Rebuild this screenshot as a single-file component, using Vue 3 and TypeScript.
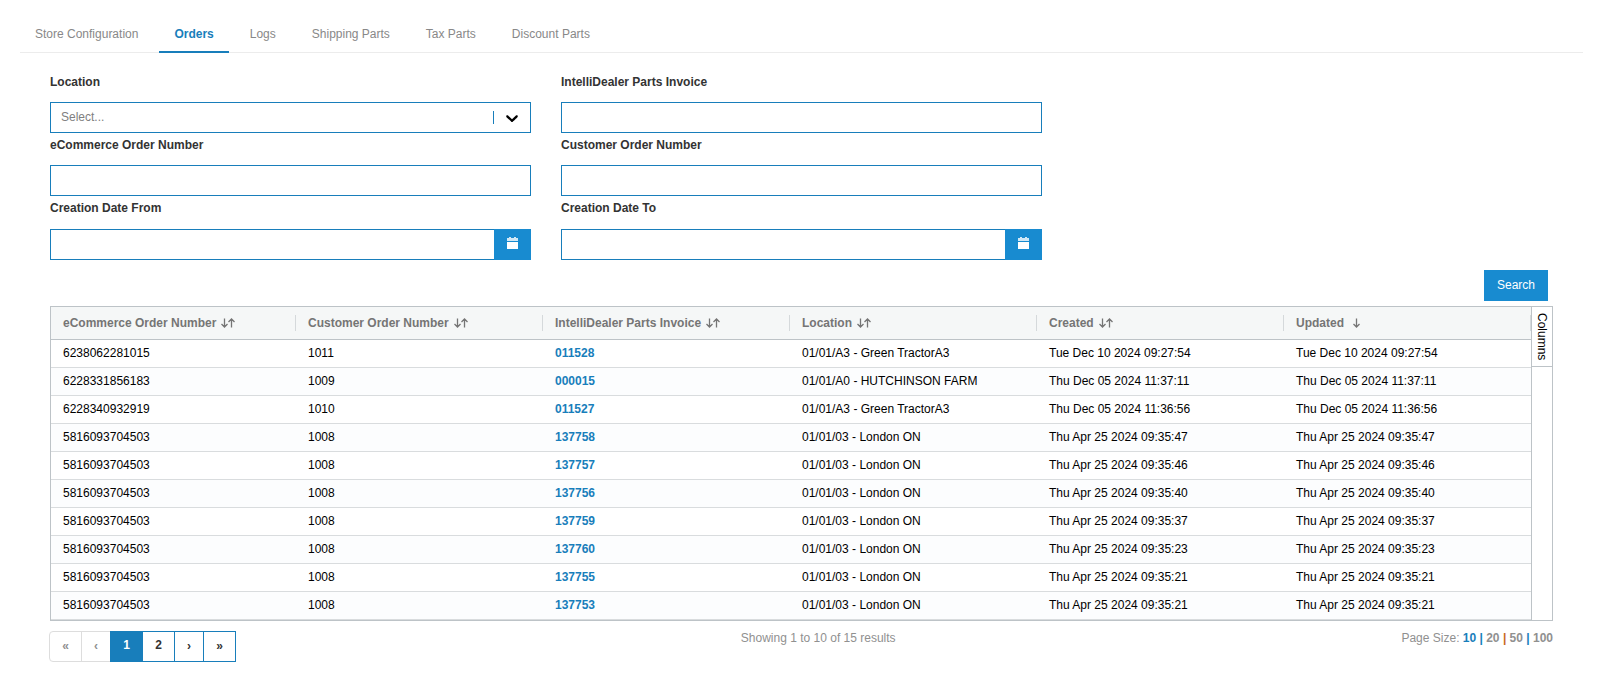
<script setup lang="ts">
import { ref } from 'vue'

interface Order {
  ecommerce: string
  customer: string
  invoice: string
  location: string
  created: string
  updated: string
}

const tabs = ['Store Configuration', 'Orders', 'Logs', 'Shipping Parts', 'Tax Parts', 'Discount Parts']
const activeTab = ref('Orders')

const columns = [
  { title: 'eCommerce Order Number', sorted: false },
  { title: 'Customer Order Number', sorted: false },
  { title: 'IntelliDealer Parts Invoice', sorted: false },
  { title: 'Location', sorted: false },
  { title: 'Created', sorted: false },
  { title: 'Updated', sorted: true },
]

function order(ecommerce: string, customer: string, invoice: string, location: string, date: string): Order {
  return { ecommerce, customer, invoice, location, created: date, updated: date }
}

const london = '01/01/03 - London ON'
const orders: Order[] = [
  order('6238062281015', '1011', '011528', '01/01/A3 - Green TractorA3', 'Tue Dec 10 2024 09:27:54'),
  order('6228331856183', '1009', '000015', '01/01/A0 - HUTCHINSON FARM', 'Thu Dec 05 2024 11:37:11'),
  order('6228340932919', '1010', '011527', '01/01/A3 - Green TractorA3', 'Thu Dec 05 2024 11:36:56'),
  order('5816093704503', '1008', '137758', london, 'Thu Apr 25 2024 09:35:47'),
  order('5816093704503', '1008', '137757', london, 'Thu Apr 25 2024 09:35:46'),
  order('5816093704503', '1008', '137756', london, 'Thu Apr 25 2024 09:35:40'),
  order('5816093704503', '1008', '137759', london, 'Thu Apr 25 2024 09:35:37'),
  order('5816093704503', '1008', '137760', london, 'Thu Apr 25 2024 09:35:23'),
  order('5816093704503', '1008', '137755', london, 'Thu Apr 25 2024 09:35:21'),
  order('5816093704503', '1008', '137753', london, 'Thu Apr 25 2024 09:35:21'),
]

const pageSizes = [10, 20, 50, 100]
const pageSize = ref(10)
const page = ref(1)
</script>

<template>
  <div class="page">
    <nav class="tabs">
      <a
        v-for="tab in tabs"
        :key="tab"
        href="#"
        class="tab"
        :class="{ active: tab === activeTab }"
        @click.prevent="activeTab = tab"
      >{{ tab }}</a>
    </nav>

    <main class="content">
      <form class="filters" @submit.prevent>
        <div class="field">
          <label for="location">Location</label>
          <div class="select-box">
            <select id="location">
              <option>Select...</option>
            </select>
            <span class="indicator">
              <svg width="20" height="20" viewBox="0 0 20 20" aria-hidden="true">
                <path d="M4.516 7.548c0.436-0.446 1.043-0.481 1.576 0l3.908 3.747 3.908-3.747c0.533-0.481 1.141-0.446 1.574 0 0.436 0.445 0.408 1.197 0 1.615-0.406 0.418-4.695 4.502-4.695 4.502-0.217 0.223-0.502 0.335-0.787 0.335s-0.57-0.112-0.789-0.335c0 0-4.287-4.084-4.695-4.502s-0.436-1.17 0-1.615z" />
              </svg>
            </span>
          </div>
        </div>
        <div class="field">
          <label for="invoice">IntelliDealer Parts Invoice</label>
          <input id="invoice" type="text" />
        </div>
        <div class="field">
          <label for="ecommerce">eCommerce Order Number</label>
          <input id="ecommerce" type="text" />
        </div>
        <div class="field">
          <label for="customer">Customer Order Number</label>
          <input id="customer" type="text" />
        </div>
        <div class="field">
          <label for="date-from">Creation Date From</label>
          <div class="date-box">
            <input id="date-from" type="text" />
            <button type="button" class="calendar" aria-label="Choose creation date from">
              <svg width="11" height="12" viewBox="0 0 11 12" aria-hidden="true">
                <path fill-opacity=".8" d="M0 1h2V0h2v1h3V0h2v1h2v3H0z" />
                <path d="M0 5h11v7H0z" />
              </svg>
            </button>
          </div>
        </div>
        <div class="field">
          <label for="date-to">Creation Date To</label>
          <div class="date-box">
            <input id="date-to" type="text" />
            <button type="button" class="calendar" aria-label="Choose creation date to">
              <svg width="11" height="12" viewBox="0 0 11 12" aria-hidden="true">
                <path fill-opacity=".8" d="M0 1h2V0h2v1h3V0h2v1h2v3H0z" />
                <path d="M0 5h11v7H0z" />
              </svg>
            </button>
          </div>
        </div>
      </form>

      <div class="actions">
        <button type="button" class="search">Search</button>
      </div>

      <div class="grid">
        <table>
          <colgroup>
            <col />
            <col v-for="n in 5" :key="n" class="wide" />
          </colgroup>
          <thead>
            <tr>
              <th v-for="column in columns" :key="column.title" scope="col">
                <div class="head">
                  <span>{{ column.title }}</span>
                  <svg v-if="column.sorted" class="single" width="9" height="10" viewBox="0 0 9 10" aria-hidden="true">
                    <path d="M4.500 0.500v8.500M1.500 6l3 3 3-3" />
                  </svg>
                  <svg v-else width="15" height="10" viewBox="0 0 15 10" aria-hidden="true">
                    <path d="M3.500 0.500v8.500M0.500 6l3 3 3-3M10.500 9.500v-8.500M7.500 4l3-3 3 3" />
                  </svg>
                </div>
              </th>
            </tr>
          </thead>
          <tbody>
            <tr v-for="row in orders" :key="row.invoice">
              <td>{{ row.ecommerce }}</td>
              <td>{{ row.customer }}</td>
              <td><a href="#">{{ row.invoice }}</a></td>
              <td>{{ row.location }}</td>
              <td>{{ row.created }}</td>
              <td>{{ row.updated }}</td>
            </tr>
          </tbody>
        </table>
        <aside class="side">
          <button type="button">Columns</button>
        </aside>
      </div>

      <footer class="footer">
        <div class="pager">
          <button type="button" disabled>«</button>
          <button type="button" disabled>‹</button>
          <button
            v-for="n in 2"
            :key="n"
            type="button"
            class="number"
            :class="{ current: n === page }"
            @click="page = n"
          >{{ n }}</button>
          <button type="button">›</button>
          <button type="button">»</button>
        </div>
        <p>Showing 1 to 10 of 15 results</p>
        <p class="sizes">
          Page Size:
          <template v-for="(size, i) in pageSizes" :key="size">
            <b v-if="i > 0" class="bar" :class="{ warm: i === 2 }"> | </b>
            <a href="#" :class="{ chosen: size === pageSize }" @click.prevent="pageSize = size">{{ size }}</a>
          </template>
        </p>
      </footer>
    </main>
  </div>
</template>

<style>
body {
  margin: 0;
  background: #fff;
}
</style>

<style scoped>
* {
  box-sizing: border-box;
}

.page {
  padding: 17px 25px 16px 20px;
  font: 12px/17px "Liberation Sans", Arial, sans-serif;
  color: #333;
}

button,
input,
select {
  font: inherit;
  border-radius: 0;
}

a {
  text-decoration: none;
}

.tabs {
  display: flex;
  gap: 6px;
  border-bottom: 1px solid #ececec;
}

.tab {
  padding: 9px 15px 8px;
  margin-bottom: -1px;
  border-bottom: 2px solid transparent;
  color: #888;
}

.tab.active {
  color: #187ebb;
  border-color: #187ebb;
  font-weight: bold;
}

.content {
  padding: 21px 30px 0;
}

.filters {
  display: grid;
  grid-template-columns: repeat(3, 1fr);
  column-gap: 30px;
  row-gap: 4px;
}

.field:nth-child(odd) {
  grid-column: 1;
}

.field {
  display: flex;
  flex-direction: column;
  gap: 11px;
}

.field:nth-child(n + 5) {
  gap: 12px;
}

label {
  font-weight: bold;
}

input,
select {
  display: block;
  width: 100%;
  height: 31px;
  padding: 0 10px;
  border: 1px solid #187ebb;
  background: #fff;
  color: #333;
}

select {
  appearance: none;
  color: #808080;
}

.select-box {
  position: relative;
}

.indicator {
  position: absolute;
  top: 9px;
  right: 1px;
  display: flex;
  align-items: center;
  height: 13px;
  padding: 0 8px;
  border-left: 1px solid #187ebb;
  pointer-events: none;
}

.date-box {
  display: flex;
}

.date-box input {
  flex: 1;
  min-width: 0;
  border-right: 0;
}

.calendar,
.search {
  border: 0;
  background: #188bd0;
  color: #fff;
}

.calendar {
  display: flex;
  align-items: center;
  justify-content: center;
  width: 37px;
  padding: 0 0 4px;
  fill: #fff;
}

.actions {
  display: flex;
  justify-content: flex-end;
  padding: 10px 5px 5px;
}

.search {
  height: 31px;
  padding: 0 13px;
}

.grid {
  display: flex;
  border: 1px solid #bdc3c7;
}

table {
  flex: 1;
  min-width: 0;
  table-layout: fixed;
  border-collapse: separate;
  border-spacing: 0;
  color: #000;
}

.wide {
  width: 16.69%;
}

th {
  height: 33px;
  padding: 0;
  background: #f5f7f7;
  border-bottom: 1px solid #bdc3c7;
  color: #757575;
  text-align: left;
}

.head {
  display: flex;
  align-items: center;
  gap: 5px;
  height: 16px;
  padding-left: 12px;
  border-right: 1px solid #d5d9db;
  white-space: nowrap;
}

.head svg {
  fill: none;
  stroke: #757575;
  stroke-width: 1.3;
}

.head .single {
  margin-left: 3px;
}

td {
  height: 28px;
  padding: 0 12px;
  border-bottom: 1px solid #d9dcde;
  white-space: nowrap;
}

tbody tr:nth-child(even) {
  background: #fcfdfe;
}

td a {
  color: #187ebb;
  font-weight: bold;
}

.side {
  width: 21px;
  border-left: 1px solid #bdc3c7;
}

.side button {
  width: 100%;
  height: 60px;
  padding: 0;
  border: 0;
  border-bottom: 1px solid #bdc3c7;
  background: #fff;
  color: #000;
  writing-mode: vertical-rl;
  line-height: 20px;
}

.footer {
  display: flex;
  justify-content: space-between;
  align-items: flex-start;
  padding-top: 10px;
  color: #909090;
}

.pager {
  display: flex;
  margin-left: -1px;
}

.pager button {
  width: 30px;
  height: 31px;
  padding: 0;
  border: 1px solid #187ebb;
  margin-right: -1px;
  background: #fff;
  color: #333;
  font-weight: bold;
}

.pager button:disabled {
  border-color: #ddd;
  color: #909090;
}

.pager button:first-child {
  border-radius: 4px 0 0 4px;
}

.pager button:first-child,
.pager .number,
.pager button:last-child {
  width: 33px;
}

.pager .number {
  padding-bottom: 2px;
}

.pager .current {
  background: #187ebb;
  color: #fff;
}

p {
  margin: 0;
  line-height: 15px;
}

.sizes a {
  color: #909090;
  font-weight: bold;
}

.sizes .chosen,
.bar {
  color: #187ebb;
}

.bar.warm {
  color: #c96a1b;
}
</style>
